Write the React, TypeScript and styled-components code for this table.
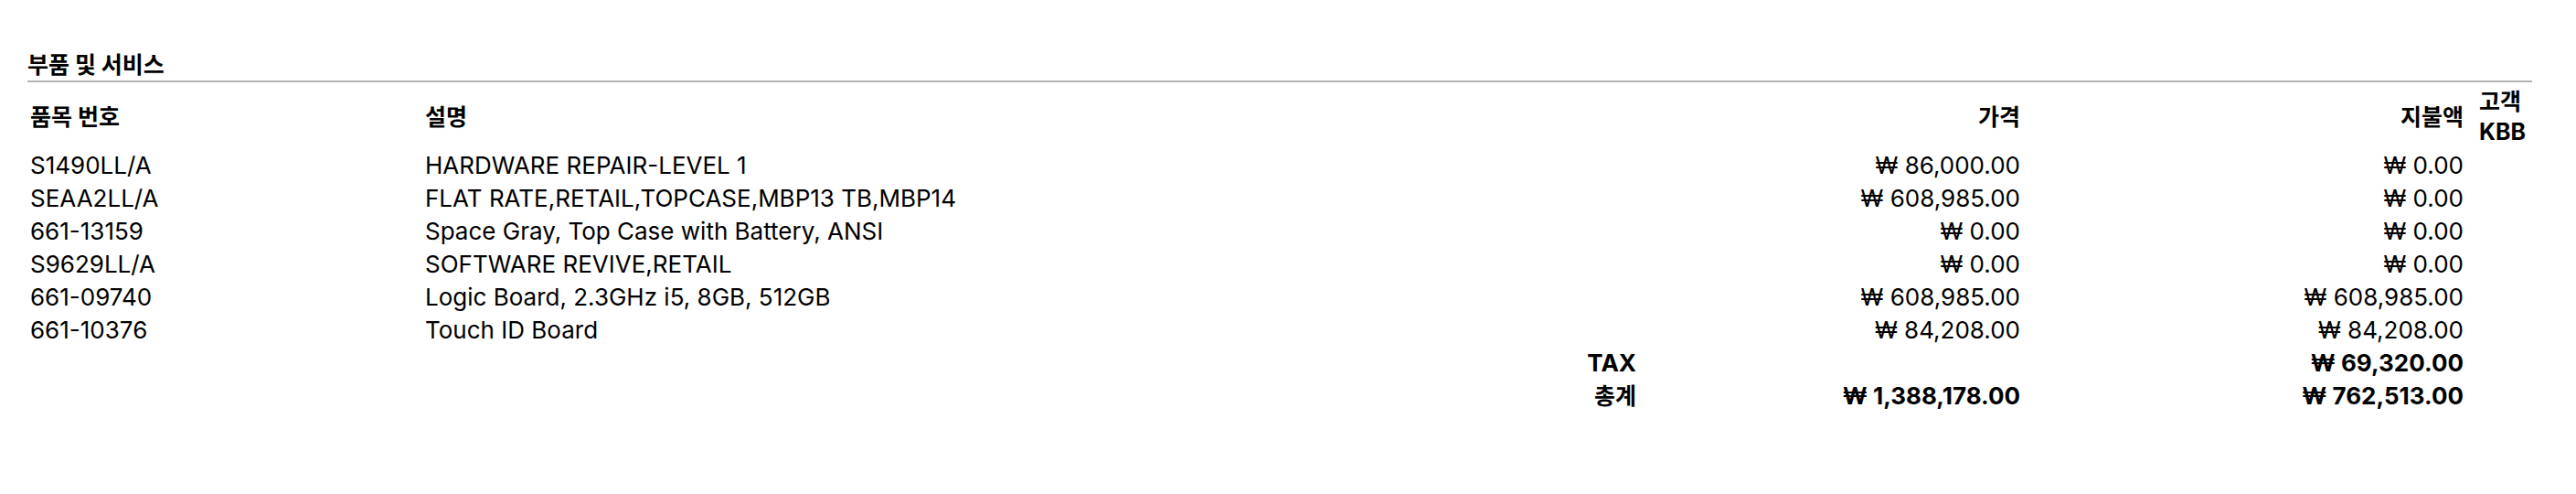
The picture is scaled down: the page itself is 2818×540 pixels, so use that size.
import React from "react";
import styled, { createGlobalStyle } from "styled-components";

const GlobalStyle = createGlobalStyle`
  html, body {
    margin: 0;
    padding: 0;
    background: #ffffff;
  }
`;

const Page = styled.div`
  padding: 54px 48px 0 30px;
  font-family: Inter, "Noto Sans CJK KR", sans-serif;
  font-size: 25px;
  color: #000000;
`;

const SectionTitle = styled.h2`
  margin: 0;
  font-size: 25px;
  font-weight: 700;
  line-height: 34px;
  border-bottom: 2px solid #b3b3b3;
`;

const columns = "432px 1fr 300px 420px 485px 72px";

const HeaderRow = styled.div`
  display: grid;
  grid-template-columns: ${columns};
  align-items: center;
  min-height: 66px;
  margin: 5px 0 2px;
  line-height: 33px;
  font-weight: 700;
`;

const ItemRow = styled.div<{ $bold?: boolean }>`
  display: grid;
  grid-template-columns: ${columns};
  align-items: center;
  height: 36px;
  line-height: 36px;
  font-size: 26px;
  font-weight: ${(p) => (p.$bold ? 700 : 400)};
`;

const Cell = styled.div<{ $align?: "left" | "right"; $col: number; $padLeft?: number; $korean?: boolean }>`
  grid-column: ${(p) => p.$col};
  text-align: ${(p) => p.$align ?? "left"};
  padding: 0 3px 0 ${(p) => p.$padLeft ?? 3}px;
  font-size: ${(p) => (p.$korean ? "25px" : "inherit")};
  white-space: ${(p) => (p.$col === 6 ? "normal" : "nowrap")};
`;

type Item = { part: string; desc: string; price: string; paid: string };

const items: Item[] = [
  { part: "S1490LL/A", desc: "HARDWARE REPAIR-LEVEL 1", price: "₩ 86,000.00", paid: "₩ 0.00" },
  { part: "SEAA2LL/A", desc: "FLAT RATE,RETAIL,TOPCASE,MBP13 TB,MBP14", price: "₩ 608,985.00", paid: "₩ 0.00" },
  { part: "661-13159", desc: "Space Gray, Top Case with Battery, ANSI", price: "₩ 0.00", paid: "₩ 0.00" },
  { part: "S9629LL/A", desc: "SOFTWARE REVIVE,RETAIL", price: "₩ 0.00", paid: "₩ 0.00" },
  { part: "661-09740", desc: "Logic Board, 2.3GHz i5, 8GB, 512GB", price: "₩ 608,985.00", paid: "₩ 608,985.00" },
  { part: "661-10376", desc: "Touch ID Board", price: "₩ 84,208.00", paid: "₩ 84,208.00" },
];

const totals = [
  { label: "TAX", korean: false, price: "", paid: "₩ 69,320.00" },
  { label: "총계", korean: true, price: "₩ 1,388,178.00", paid: "₩ 762,513.00" },
];

export default function App() {
  return (
    <>
      <GlobalStyle />
      <Page>
        <SectionTitle>부품 및 서비스</SectionTitle>
        <HeaderRow>
          <Cell $col={1}>품목 번호</Cell>
          <Cell $col={2}>설명</Cell>
          <Cell $col={4} $align="right">가격</Cell>
          <Cell $col={5} $align="right">지불액</Cell>
          <Cell $col={6} $padLeft={14}>고객 KBB</Cell>
        </HeaderRow>
        {items.map((it) => (
          <ItemRow key={it.part}>
            <Cell $col={1}>{it.part}</Cell>
            <Cell $col={2}>{it.desc}</Cell>
            <Cell $col={4} $align="right">{it.price}</Cell>
            <Cell $col={5} $align="right">{it.paid}</Cell>
          </ItemRow>
        ))}
        {totals.map((t) => (
          <ItemRow key={t.label} $bold>
            <Cell $col={3} $align="right" $korean={t.korean}>{t.label}</Cell>
            <Cell $col={4} $align="right">{t.price}</Cell>
            <Cell $col={5} $align="right">{t.paid}</Cell>
          </ItemRow>
        ))}
      </Page>
    </>
  );
}
